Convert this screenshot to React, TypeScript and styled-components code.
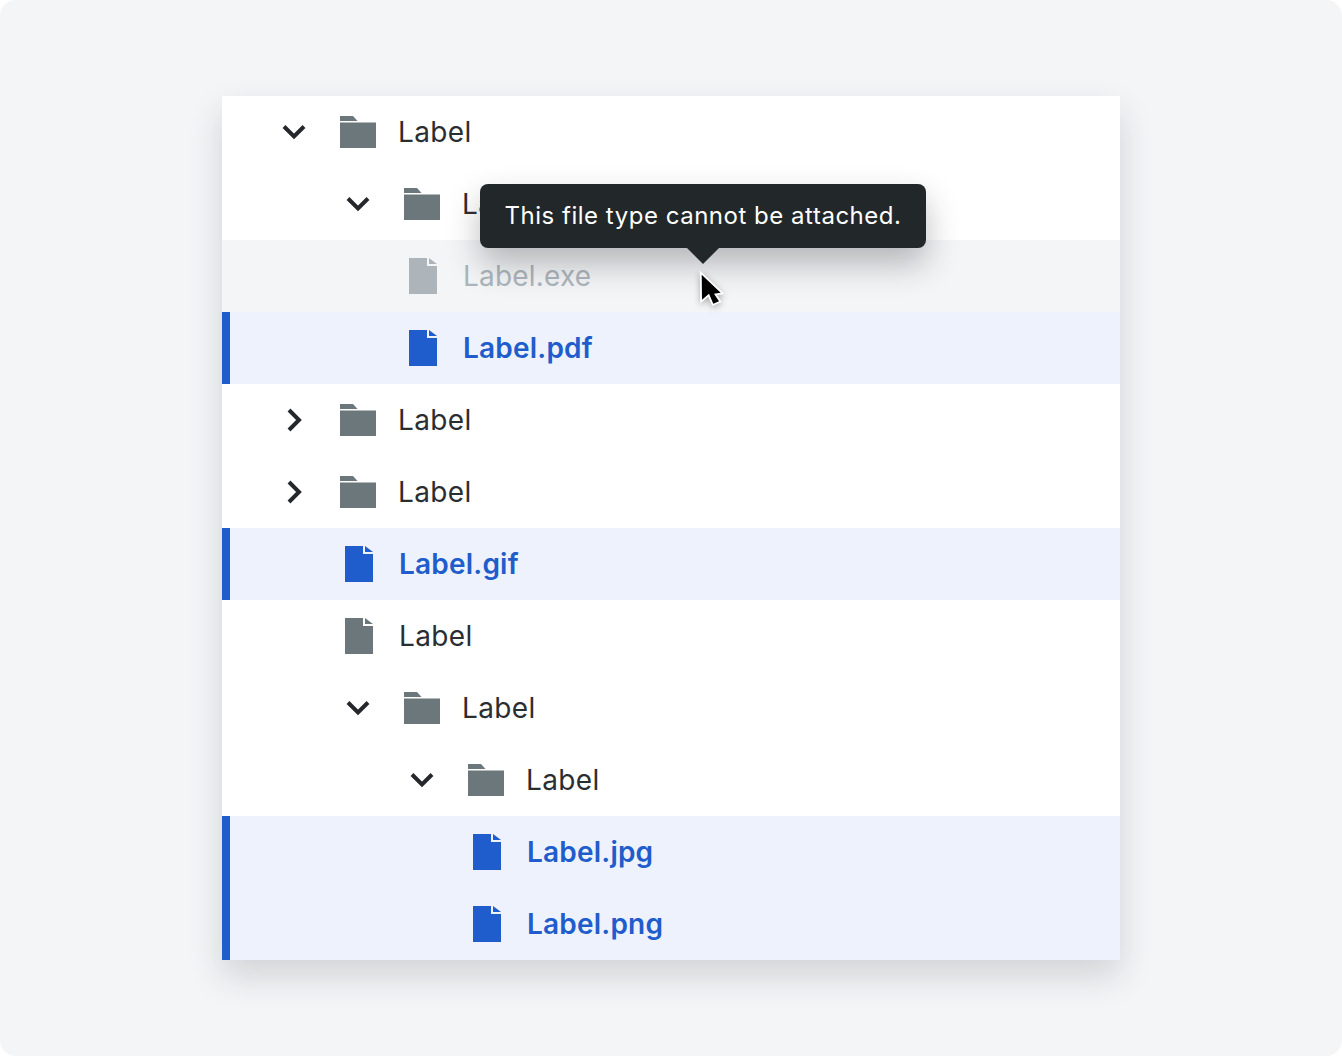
import React from "react";
import styled, { createGlobalStyle } from "styled-components";

const Global = createGlobalStyle`
  html, body { margin: 0; padding: 0; background: #fff; }
  body { font-family: Inter, "Liberation Sans", sans-serif; }
`;

const Page = styled.div`
  width: 1342px;
  height: 1056px;
  box-sizing: border-box;
  padding: 96px 222px;
  background: #f4f5f7;
  border-radius: 16px;
`;

const Panel = styled.div`
  position: relative;
  width: 898px;
  background: #fff;
  box-shadow: 0 16px 32px rgba(33, 37, 41, 0.16);
`;

type RowState = "normal" | "disabled" | "selected";

const Row = styled.div<{ $depth: number; $state: RowState }>`
  display: flex;
  align-items: center;
  height: 72px;
  box-sizing: border-box;
  padding-left: ${(p) => 48 + p.$depth * 64 - (p.$state === "selected" ? 8 : 0)}px;
  border-left: ${(p) => (p.$state === "selected" ? "8px solid #1f5ccc" : "0 none")};
  background: ${(p) =>
    p.$state === "selected" ? "#edf2fc" : p.$state === "disabled" ? "#f4f5f7" : "#fff"};
`;

const Toggle = styled.span`
  display: flex;
  flex: none;
  align-items: center;
  justify-content: center;
  width: 48px;
  height: 48px;
  margin-right: 22px;
  color: #24282c;
`;

const IconSlot = styled.span<{ $kind: "folder" | "file" }>`
  display: block;
  flex: none;
  width: ${(p) => (p.$kind === "folder" ? 36 : 28)}px;
  height: ${(p) => (p.$kind === "folder" ? 32 : 36)}px;
  margin-left: ${(p) => (p.$kind === "folder" ? 0 : 5)}px;
  margin-right: ${(p) => (p.$kind === "folder" ? 22 : 26)}px;
  svg { display: block; }
`;

const Label = styled.span<{ $state: RowState }>`
  font-size: 28px;
  line-height: 36px;
  letter-spacing: ${(p) => (p.$state === "normal" ? 0.35 : 0.2)}px;
  font-weight: ${(p) => (p.$state === "selected" ? 600 : 400)};
  color: ${(p) =>
    p.$state === "selected" ? "#1f5ccc" : p.$state === "disabled" ? "#adb5bd" : "#2a2e33"};
`;

const Tooltip = styled.div`
  position: absolute;
  left: 258px;
  top: 88px;
  width: 446px;
  height: 64px;
  box-sizing: border-box;
  padding-bottom: 2px;
  display: flex;
  align-items: center;
  justify-content: center;
  border-radius: 8px;
  background: #22272a;
  color: #fff;
  font-size: 24px;
  letter-spacing: 0.52px;
  white-space: nowrap;
  box-shadow: 0 16px 32px rgba(33, 37, 41, 0.3);
  &::after {
    content: "";
    position: absolute;
    left: 207px;
    top: 64px;
    border-left: 16px solid transparent;
    border-right: 16px solid transparent;
    border-top: 16px solid #22272a;
  }
`;

const Cursor = styled.svg`
  position: absolute;
  left: 476px;
  top: 172px;
  filter: drop-shadow(0 2px 3px rgba(0, 0, 0, 0.3));
`;

const Chevron = ({ open }: { open: boolean }) => (
  <svg width="24" height="24" viewBox="0 0 24 24" fill="none">
    <path
      d={open ? "M2 6.5 12 16.5 22 6.5" : "M7 2 17 12 7 22"}
      stroke="currentColor"
      strokeWidth="4"
    />
  </svg>
);

const FolderIcon = () => (
  <svg width="36" height="32" viewBox="0 0 36 32">
    <path fill="#6c777c" d="M0 0h13l4.5 5H0z" />
    <path fill="#6c777c" d="M0 6.6h36V32H0z" />
  </svg>
);

const FileIcon = ({ color }: { color: string }) => (
  <svg width="28" height="36" viewBox="0 0 28 36">
    <path fill={color} d="M0 0h18v8h10v28H0z" />
    <path fill={color} d="M20 0l8 6h-8z" />
  </svg>
);

type Item = {
  depth: number;
  kind: "folder" | "file";
  open?: boolean;
  text: string;
  state?: RowState;
};

const items: Item[] = [
  { depth: 0, kind: "folder", open: true, text: "Label" },
  { depth: 1, kind: "folder", open: true, text: "Label" },
  { depth: 2, kind: "file", text: "Label.exe", state: "disabled" },
  { depth: 2, kind: "file", text: "Label.pdf", state: "selected" },
  { depth: 0, kind: "folder", open: false, text: "Label" },
  { depth: 0, kind: "folder", open: false, text: "Label" },
  { depth: 1, kind: "file", text: "Label.gif", state: "selected" },
  { depth: 1, kind: "file", text: "Label" },
  { depth: 1, kind: "folder", open: true, text: "Label" },
  { depth: 2, kind: "folder", open: true, text: "Label" },
  { depth: 3, kind: "file", text: "Label.jpg", state: "selected" },
  { depth: 3, kind: "file", text: "Label.png", state: "selected" },
];

const fileColor: Record<RowState, string> = {
  normal: "#6c777c",
  disabled: "#adb5ba",
  selected: "#1f5ccc",
};

export default function App() {
  return (
    <Page>
      <Global />
      <Panel>
        {items.map((it, i) => {
          const state = it.state ?? "normal";
          return (
            <Row key={i} $depth={it.kind === "file" ? it.depth - 1 : it.depth} $state={state}>
              <Toggle>{it.kind === "folder" && <Chevron open={!!it.open} />}</Toggle>
              <IconSlot $kind={it.kind}>
                {it.kind === "folder" ? <FolderIcon /> : <FileIcon color={fileColor[state]} />}
              </IconSlot>
              <Label $state={state}>{it.text}</Label>
            </Row>
          );
        })}
        <Tooltip>This file type cannot be attached.</Tooltip>
        <Cursor width="30" height="40" viewBox="0 0 30 40">
          <path
            d="M3.7 6.7 4 31.7 11 25.7 15.3 35.7 21 33.3 16 25.7 22.7 24.7z"
            fill="#000"
            stroke="#fff"
            strokeWidth="3.6"
            paintOrder="stroke"
          />
        </Cursor>
      </Panel>
    </Page>
  );
}
